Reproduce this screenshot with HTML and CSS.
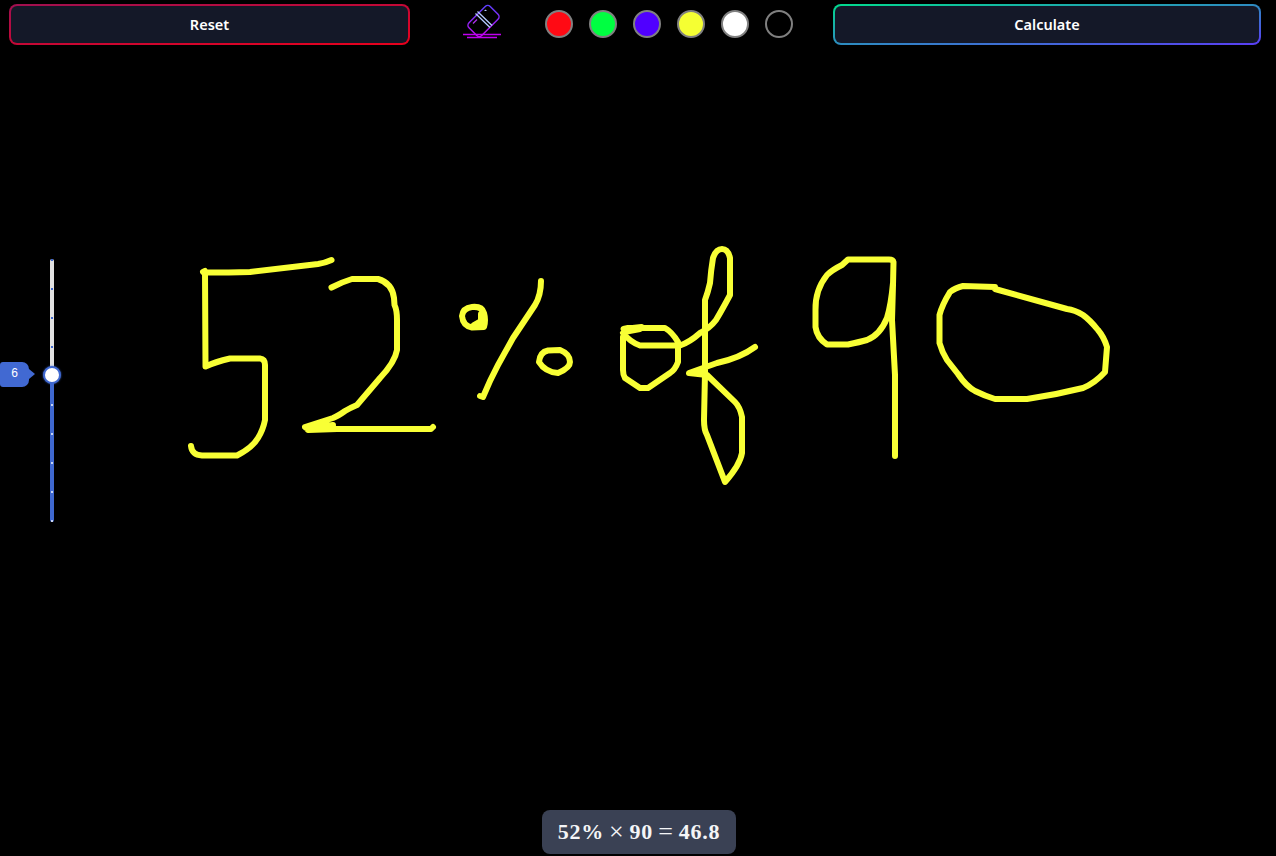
FILE: index.html
```html
<!DOCTYPE html>
<html lang="en">
<head>
<meta charset="utf-8">
<title>Calculator</title>
<link rel="stylesheet" href="styles.css">
</head>
<body>
<main class="board">
  <svg class="canvas" width="1276" height="856" viewBox="0 0 1276 856" fill="none" stroke="#f8ff35" stroke-width="6" stroke-linecap="round" stroke-linejoin="round">
    <path d="M331.500 260 Q325 263 318 264 L250 272 Q230 272.500 205 272.500 L205.500 366.500 Q215 362 230 358.500 L260 358.500 Q265 359 265 365 L265 420 Q263 430 258 438 Q252 448 237 455.500 L202 455.500 Q192 455 191 446 M203 272 L205 271"/>
    <path d="M331.500 287.500 Q342 282 352 279 L378 279 Q392 283 394 298 L394.500 305 Q397 310 397 320 L397 350 Q395 362 380 378 L357 405 Q350 408 345 411 Q338 416 333 418 L305 427 L308 430 L337 429 L431 429 L433 427 M306 428 L333 425"/>
    <path d="M541 281 Q541 295 535 305 L513 338 L498 365 Q490 380 483 397 L480 396"/>
    <path d="M462 316 Q463 308 472 307 Q482 306 484 313 Q486 320 484 327 L472 327.500 Q463 326 462 316 Z M481 314 L481 321 L474 325"/>
    <path d="M539 362 Q540 352 548 350.500 L560 350 Q570 354 570 362 Q570 368 558 373 Q545 372 539 362 Z"/>
    <path d="M641.500 327 L623.500 329 L628 328 L665 328 Q672 332 678 342 L678 362 Q675 370 670 373 L648 388 L640 388 L625 378 Q623 375 623 370 L623 337 M623 333 Q630 342 640 345.500 L680 345.500 Q690 342 700 333 Q710 328 716 320 Q722 310 730 295 L730 258 Q728 249 722 249 Q716 249 713 258 Q711 270 710 283 Q708 292 705 300 L705 373 L704 420 Q704 430 707 435 L725 482 Q740 465 742 453 L742 417 Q740 407 735 402 L707 375 L689 373 L717 363 Q740 358 755 347 M624 332 L640 329"/>
    <path d="M895 456 L895 375 L892 320 L893 285 L893.500 262 Q893 259.500 889 259.500 L848 259.500 L842 265 Q832 270 827 275 Q815 290 815.500 310 L815.500 327 Q817 338 827 344.500 L848 344.500 Q860 342 867 340 Q880 335 887 318 Q891 305 893 283"/>
    <path d="M995 287 L963 286 Q955 288 950 292 Q942 305 939.500 315 L939.500 343 Q942 352 947 360 L958 374 Q966 386 975 391 Q985 396 995 399 L1027 399 Q1055 395 1083 388 Q1095 383 1105 372 L1107 347 Q1104 337 1098 330 Q1090 320 1083 315 Q1075 310 1067 309 L995 289"/>
  </svg>

  <header class="toolbar">
    <button class="action reset" type="button">Reset</button>
    <div class="tools">
      <svg class="eraser" width="40" height="36" viewBox="0 0 40 36" fill="none">
        <defs>
          <linearGradient id="eraserStroke" x1="34" y1="3" x2="6" y2="34" gradientUnits="userSpaceOnUse">
            <stop offset="0" stop-color="#4f46ff"/>
            <stop offset="1" stop-color="#d400e8"/>
          </linearGradient>
        </defs>
        <rect x="6.500" y="9" width="30" height="18" rx="3.500" transform="rotate(-45 21.500 18)" stroke="url(#eraserStroke)" stroke-width="1.500"/>
        <path d="M13.500 10.500 L28 24.500 M15.500 8.500 L30 22.500" stroke="#b4caff" stroke-width="1.300"/>
        <path d="M11 20.500 L15 16.500" stroke="#b030f0" stroke-width="1.200"/>
        <path d="M22 8 L25 8 L23.500 6.500 Z" fill="#b4caff"/>
        <path d="M1 31.500 H39 M5 34.500 H35" stroke="#c000f0" stroke-width="1.500"/>
      </svg>
      <div class="swatches">
        <span class="swatch red"></span>
        <span class="swatch green"></span>
        <span class="swatch violet"></span>
        <span class="swatch yellow"></span>
        <span class="swatch white"></span>
        <span class="swatch black"></span>
      </div>
    </div>
    <button class="action calculate" type="button">Calculate</button>
  </header>

  <div class="slider">
    <div class="rail">
      <i class="tick"></i><i class="tick"></i><i class="tick"></i><i class="tick"></i><i class="tick hidden"></i>
      <i class="tick on"></i><i class="tick on"></i><i class="tick on"></i><i class="tick on"></i><i class="tick on"></i>
    </div>
    <div class="thumb"></div>
    <div class="bubble">6</div>
  </div>

  <output class="result">52%<span class="op">×</span>90<span class="op">=</span>46.8</output>
</main>
</body>
</html>
```
FILE: styles.css
```css
* { box-sizing: border-box; }

html, body {
  margin: 0;
  height: 100%;
  background: #000;
  overflow: hidden;
}

.board {
  position: relative;
  height: 856px;
  background: #000;
}

.canvas {
  position: absolute;
  inset: 0;
  display: block;
}

.toolbar {
  position: relative;
  display: grid;
  grid-template-columns: 401px 1fr 428px;
  padding: 4px 15px 0 9px;
  align-items: start;
}

.action {
  height: 41px;
  border: 2px solid transparent;
  border-radius: 8px;
  color: #fff;
  font: 600 14.500px "Noto Sans", "Open Sans", sans-serif;
  padding: 0 0 2px;
}

.reset {
  background: linear-gradient(#141828, #141828) padding-box,
    linear-gradient(to bottom right, #a01050, #e8001c) border-box;
}

.calculate {
  background: linear-gradient(#141828, #141828) padding-box,
    linear-gradient(to bottom right, #00dc8c, #5a3cf5) border-box;
}

.tools {
  display: flex;
  align-items: flex-start;
  padding-left: 52px;
  gap: 43px;
}

.eraser {
  display: block;
  margin-top: -1px;
}

.swatches {
  display: flex;
  gap: 16px;
  padding-top: 6px;
}

.swatch {
  display: block;
  width: 28px;
  height: 28px;
  border-radius: 50%;
  border: 2px solid #808080;
}

.red { background: #ff0a14; }
.green { background: #00ff41; }
.violet { background: #5000ff; }
.yellow { background: #f5ff33; }
.white { background: #fff; }
.black { background: #000; }

.slider {
  position: absolute;
  left: 50px;
  top: 259px;
  width: 4px;
  height: 263px;
}

.rail {
  height: 100%;
  border-radius: 2px;
  background: linear-gradient(#e2e2e2 0 116px, #3f68d0 116px);
  display: flex;
  flex-direction: column;
  justify-content: space-between;
  align-items: center;
}

.tick {
  width: 2px;
  height: 2px;
  background: #3f68d0;
}

.tick.on { background: #c8d4f0; }
.tick.hidden { visibility: hidden; }

.thumb {
  position: absolute;
  left: -7px;
  top: 107px;
  width: 18px;
  height: 18px;
  border-radius: 50%;
  background: #fff;
  border: 2px solid #3f68d0;
  box-shadow: 0 0 2px #3f68d0;
}

.bubble {
  position: absolute;
  left: -50px;
  top: 103px;
  width: 29px;
  height: 25px;
  padding-top: 3px;
  border-radius: 3px 7px 7px 3px;
  background: #4169d2;
  color: #fff;
  font: 12px/16px "Liberation Sans", sans-serif;
  text-align: center;
}

.bubble::after {
  content: "";
  position: absolute;
  left: 29px;
  top: 7px;
  border: 5px solid transparent;
  border-left: 6px solid #4169d2;
  border-right: 0;
}

.result {
  position: absolute;
  left: 542px;
  top: 810px;
  width: 194px;
  height: 44px;
  display: flex;
  justify-content: center;
  border-radius: 8px;
  background: #3a4154;
  color: #f4f5f7;
  font: 700 22px/44px "Liberation Serif", serif;
  letter-spacing: 0.8px;
  white-space: nowrap;
}

.op {
  font-weight: 400;
  font-size: 26px;
  margin: 0 5px;
}
```
